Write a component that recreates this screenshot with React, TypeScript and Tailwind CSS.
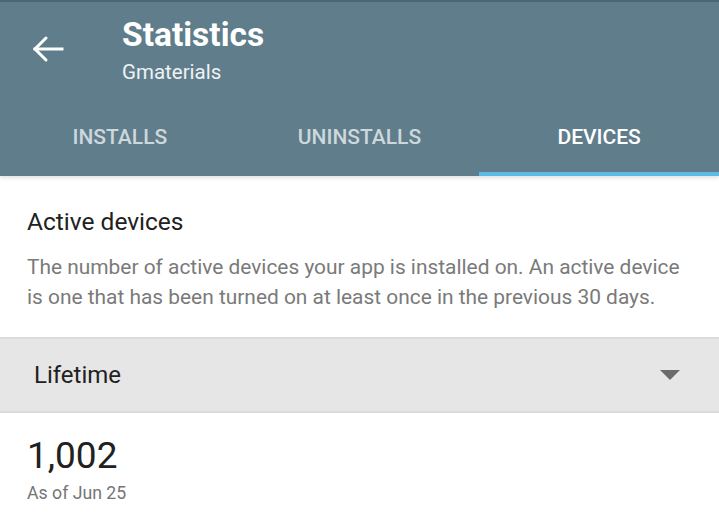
const TABS = ["INSTALLS", "UNINSTALLS", "DEVICES"];

export default function App() {
  const active = 2;

  return (
    <div className="h-[518px] w-[719px] overflow-hidden bg-white font-['Roboto',sans-serif]">
      <header className="border-t-2 border-[#4c6673] bg-[#607d8b] shadow-[0_2px_4px_rgba(0,0,0,0.12)]">
        <div className="flex h-[98px] items-start">
          <div className="w-[122px] pt-[33px] pl-[32px]">
            <svg width="32" height="28" viewBox="0 0 32 28" fill="none" stroke="white" strokeWidth="3" strokeLinecap="square">
              <path d="M3 14h27" />
              <path d="M14 3 3 14l11 11" strokeLinecap="round" strokeLinejoin="miter" />
            </svg>
          </div>
          <div className="pt-[13px]">
            <h1 className="text-[33.5px] leading-[40px] font-bold text-white">Statistics</h1>
            <p className="mt-[5px] text-[20.5px] leading-[24px] text-white/90">Gmaterials</p>
          </div>
        </div>
        <nav className="grid h-[76px] grid-cols-3">
          {TABS.map((tab, i) => (
            <div
              key={tab}
              className={
                i === active
                  ? "flex items-center justify-center border-b-[4px] border-[#5bbbe6] pt-[4px] text-[21px] font-medium text-white"
                  : "flex items-center justify-center border-b-[4px] border-transparent pt-[4px] text-[21px] font-medium text-[#cdd8dd]"
              }
            >
              {tab}
            </div>
          ))}
        </nav>
      </header>

      <section className="px-[27px] pt-[32px] pb-[25px]">
        <h2 className="text-[24.5px] leading-[28px] text-[#212121]">Active devices</h2>
        <p className="mt-[16px] text-[20.9px] leading-[30px] text-[#7a7a7a]">
          The number of active devices your app is installed on. An active device is one that has been
          turned on at least once in the previous 30 days.
        </p>
      </section>

      <div className="flex h-[76px] items-center justify-between border-y-2 border-[#dcdcdc] bg-[#e6e6e6] pr-[39px] pl-[34px]">
        <span className="text-[24px] text-[#212121]">Lifetime</span>
        <svg width="20" height="10" viewBox="0 0 20 10">
          <path d="M0 0h20L10 10z" fill="#6b6b6b" />
        </svg>
      </div>

      <section className="px-[27px] pt-[20px]">
        <div className="text-[37px] leading-[46px] text-[#212121]">1,002</div>
        <div className="mt-[3px] text-[17.7px] leading-[22px] text-[#757575]">As of Jun 25</div>
      </section>
    </div>
  );
}
